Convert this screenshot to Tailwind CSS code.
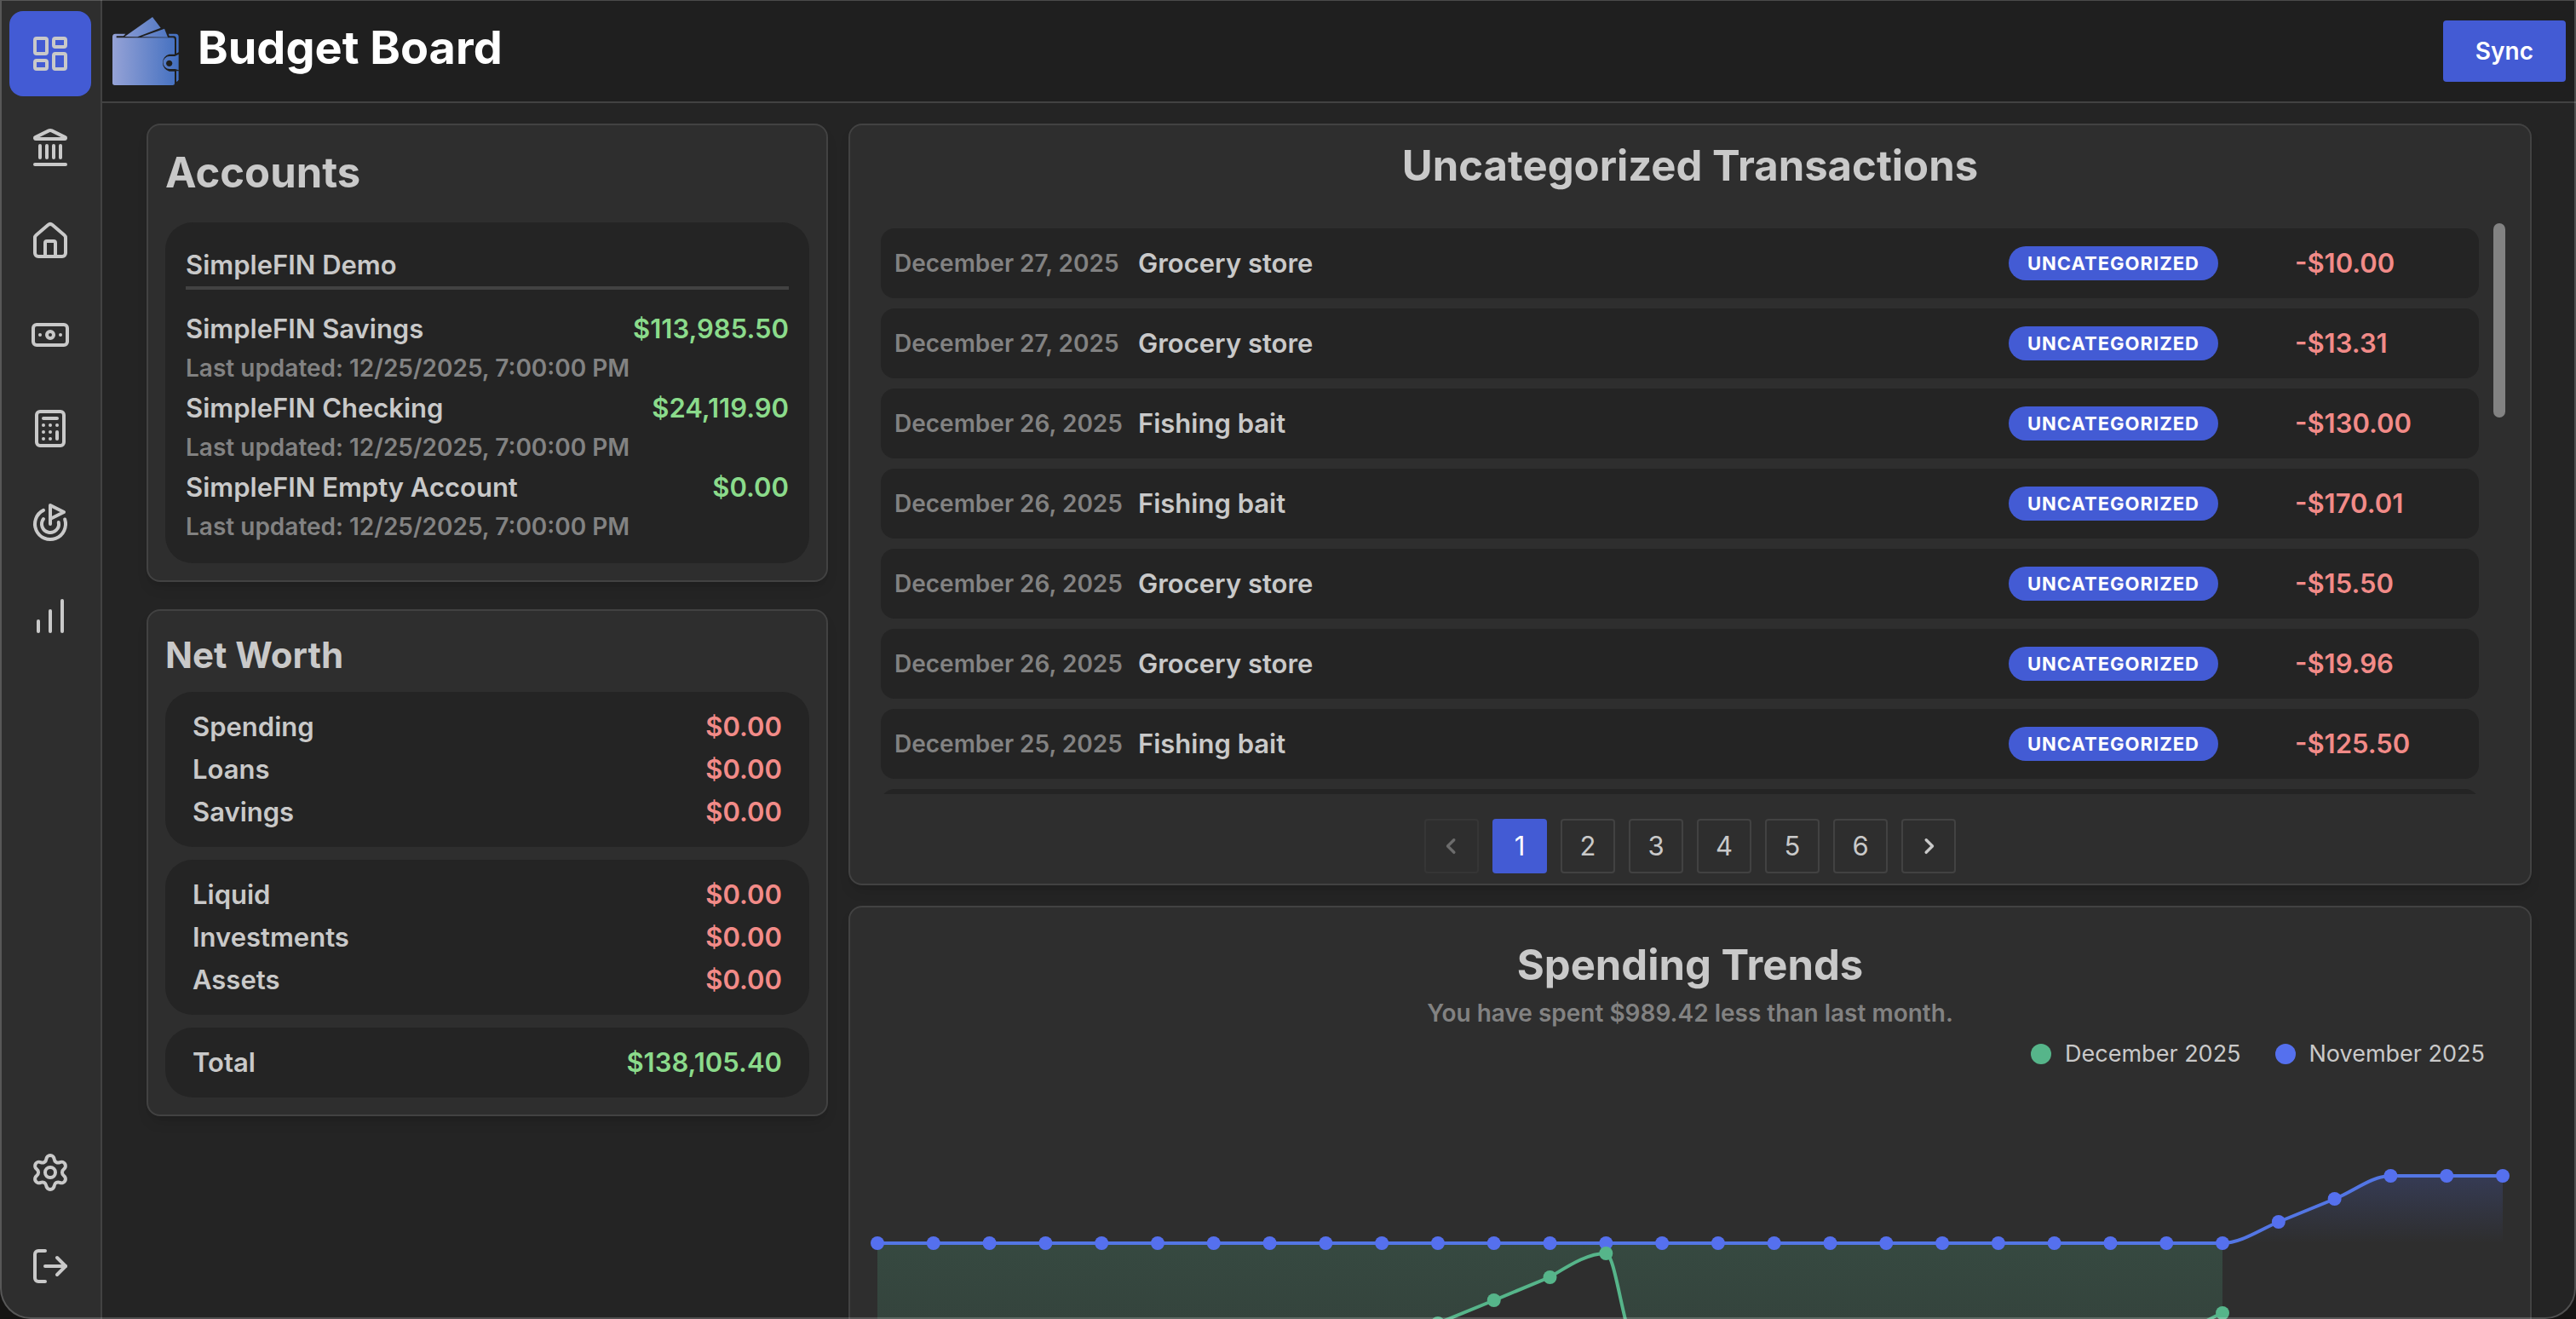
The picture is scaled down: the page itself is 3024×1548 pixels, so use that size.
<!DOCTYPE html>
<html lang="en" class="bg-[#242424]">
<head>
  <meta charset="utf-8">
  <title>Budget Board</title>
  <script src="https://cdn.jsdelivr.net/npm/@tailwindcss/browser@4"></script>
</head>
<body class="h-screen overflow-hidden bg-[#242424] text-[#c9c9c9] font-['Inter',sans-serif] font-semibold text-[31px] leading-[50px]">
  <div class="flex h-full">

    <!-- Sidebar -->
    <nav class="flex w-[120px] shrink-0 flex-col justify-between border-r-2 border-[#424242] bg-[#2e2e2e] pt-[13px] pr-[11px] pb-3 pl-[11px]">
      <div class="flex flex-col gap-[10px]">
        <button aria-label="Dashboard" class="flex h-[100px] items-center justify-center rounded-2xl bg-[#435bd4]">
          <svg class="size-12" viewBox="0 0 24 24" fill="none" stroke="currentColor" stroke-width="2" stroke-linecap="round" stroke-linejoin="round"><rect width="7" height="9" x="3" y="3" rx="1"/><rect width="7" height="5" x="14" y="3" rx="1"/><rect width="7" height="9" x="14" y="12" rx="1"/><rect width="7" height="5" x="3" y="16" rx="1"/></svg>
        </button>
        <button aria-label="Accounts" class="flex h-[100px] items-center justify-center rounded-2xl">
          <svg class="size-12" viewBox="0 0 24 24" fill="none" stroke="currentColor" stroke-width="2" stroke-linecap="round" stroke-linejoin="round"><path d="M10 18v-7"/><path d="M11.12 2.198a2 2 0 0 1 1.76.006l7.866 3.847c.476.233.31.949-.22.949H3.474c-.53 0-.695-.716-.22-.949z"/><path d="M14 18v-7"/><path d="M18 18v-7"/><path d="M3 22h18"/><path d="M6 18v-7"/></svg>
        </button>
        <button aria-label="Assets" class="flex h-[100px] items-center justify-center rounded-2xl">
          <svg class="size-12" viewBox="0 0 24 24" fill="none" stroke="currentColor" stroke-width="2" stroke-linecap="round" stroke-linejoin="round"><path d="M15 21v-8a1 1 0 0 0-1-1h-4a1 1 0 0 0-1 1v8"/><path d="M3 10a2 2 0 0 1 .709-1.528l7-6a2 2 0 0 1 2.582 0l7 6A2 2 0 0 1 21 10v9a2 2 0 0 1-2 2H5a2 2 0 0 1-2-2z"/></svg>
        </button>
        <button aria-label="Transactions" class="flex h-[100px] items-center justify-center rounded-2xl">
          <svg class="size-12" viewBox="0 0 24 24" fill="none" stroke="currentColor" stroke-width="2" stroke-linecap="round" stroke-linejoin="round"><rect width="20" height="12" x="2" y="6" rx="2"/><circle cx="12" cy="12" r="2"/><path d="M6 12h.01M18 12h.01"/></svg>
        </button>
        <button aria-label="Budgets" class="flex h-[100px] items-center justify-center rounded-2xl">
          <svg class="size-12" viewBox="0 0 24 24" fill="none" stroke="currentColor" stroke-width="2" stroke-linecap="round" stroke-linejoin="round"><rect width="16" height="20" x="4" y="2" rx="2"/><path d="M8 6h8"/><path d="M16 14v4"/><path d="M16 10h.01"/><path d="M12 10h.01"/><path d="M8 10h.01"/><path d="M12 14h.01"/><path d="M8 14h.01"/><path d="M12 18h.01"/><path d="M8 18h.01"/></svg>
        </button>
        <button aria-label="Goals" class="flex h-[100px] items-center justify-center rounded-2xl">
          <svg class="size-12" viewBox="0 0 24 24" fill="none" stroke="currentColor" stroke-width="2" stroke-linecap="round" stroke-linejoin="round"><path d="M12 13V2l8 4-8 4"/><path d="M20.561 10.222a9 9 0 1 1-12.55-5.29"/><path d="M8.002 9.997a5 5 0 1 0 8.9 2.02"/></svg>
        </button>
        <button aria-label="Trends" class="flex h-[100px] items-center justify-center rounded-2xl">
          <svg class="size-12" viewBox="0 0 24 24" fill="none" stroke="currentColor" stroke-width="2" stroke-linecap="round" stroke-linejoin="round"><path d="M5 21v-6"/><path d="M12 21V9"/><path d="M19 21V3"/></svg>
        </button>
      </div>
      <div class="flex flex-col gap-[10px]">
        <button aria-label="Settings" class="flex h-[100px] items-center justify-center rounded-2xl">
          <svg class="size-12" viewBox="0 0 24 24" fill="none" stroke="currentColor" stroke-width="2" stroke-linecap="round" stroke-linejoin="round"><path d="M9.671 4.136a2.34 2.34 0 0 1 4.659 0 2.34 2.34 0 0 0 3.319 1.915 2.34 2.34 0 0 1 2.33 4.033 2.34 2.34 0 0 0 0 3.831 2.34 2.34 0 0 1-2.33 4.033 2.34 2.34 0 0 0-3.319 1.915 2.34 2.34 0 0 1-4.659 0 2.34 2.34 0 0 0-3.32-1.915 2.34 2.34 0 0 1-2.33-4.033 2.34 2.34 0 0 0 0-3.831A2.34 2.34 0 0 1 6.35 6.051a2.34 2.34 0 0 0 3.319-1.915"/><circle cx="12" cy="12" r="3"/></svg>
        </button>
        <button aria-label="Log out" class="flex h-[100px] items-center justify-center rounded-2xl">
          <svg class="size-12" viewBox="0 0 24 24" fill="none" stroke="currentColor" stroke-width="2" stroke-linecap="round" stroke-linejoin="round"><path d="m16 17 5-5-5-5"/><path d="M21 12H9"/><path d="M9 21H5a2 2 0 0 1-2-2V5a2 2 0 0 1 2-2h4"/></svg>
        </button>
      </div>
    </nav>

    <div class="flex min-w-0 flex-1 flex-col">
      <!-- Header -->
      <header class="flex h-[121px] shrink-0 items-center justify-between border-b-2 border-[#424242] bg-[#1f1f1f] px-3">
        <div class="flex items-center gap-[22px]">
          <svg class="h-[84px] w-[78px]" viewBox="24 18 234 252">
            <defs>
              <linearGradient id="wallet" gradientUnits="userSpaceOnUse" x1="24" y1="0" x2="258" y2="0">
                <stop offset="0" stop-color="#95a2d6"/>
                <stop offset="1" stop-color="#426fc0"/>
              </linearGradient>
            </defs>
            <g fill="url(#wallet)">
              <path d="M67 93 165 24 194 62 112 94z"/>
              <path d="M126 94 207 65 219 95z"/>
              <path d="M34 83H70L63 91H38V97H237Q243 97 243 104V155H224A31 31 0 0 0 224 215H243V258Q243 264 236 264H32Q24 264 24 256V94Q24 83 34 83z"/>
              <path d="M222 83H247Q257 83 257 94V148L249 152V101Q249 92 240 91H224z"/>
              <path fill-rule="evenodd" d="M225 162H244L257 155V211L245 207H225A22 22 0 0 1 225 162zM224 176a11 11 0 1 0 .1 0z"/>
              <path d="M249 214H257V244Q256 250 249 252z"/>
            </g>
          </svg>
          <h1 class="pb-2 text-[54px] leading-[64px] font-bold text-white">Budget Board</h1>
        </div>
        <button class="h-[72px] rounded-[4px] bg-[#435bd4] px-[38px] text-[28px] text-white">Sync</button>
      </header>

      <!-- Dashboard -->
      <main class="mx-auto flex w-full max-w-[2800px] min-h-0 flex-1 items-start gap-6 pt-6">
        <div class="flex w-[800px] shrink-0 flex-col gap-8">
          <section class="rounded-2xl border-2 border-[#424242] bg-[#2e2e2e] px-5 pt-[18px] pb-5 shadow-lg">
            <h2 class="mb-5 text-[49px] leading-[76px] font-bold">Accounts</h2>
            <div class="rounded-[32px] bg-[#242424] px-6 pt-[25px] pb-[21px]">
              <div class="mb-[21px] border-b-4 border-[#424242]">SimpleFIN Demo</div>
              <div class="flex justify-between"><span>SimpleFIN Savings</span><span class="text-[#8bdb8b]">$113,985.50</span></div>
              <div class="text-[28px] leading-[43px] text-[#828282]">Last updated: 12/25/2025, 7:00:00 PM</div>
              <div class="flex justify-between"><span>SimpleFIN Checking</span><span class="text-[#8bdb8b]">$24,119.90</span></div>
              <div class="text-[28px] leading-[43px] text-[#828282]">Last updated: 12/25/2025, 7:00:00 PM</div>
              <div class="flex justify-between"><span>SimpleFIN Empty Account</span><span class="text-[#8bdb8b]">$0.00</span></div>
              <div class="text-[28px] leading-[43px] text-[#828282]">Last updated: 12/25/2025, 7:00:00 PM</div>
            </div>
          </section>

          <section class="flex flex-col gap-[15px] rounded-2xl border-2 border-[#424242] bg-[#2e2e2e] px-5 pt-6 pb-5 shadow-lg">
            <h3 class="text-[42px] leading-[56px] font-bold">Net Worth</h3>
            <div class="rounded-[32px] bg-[#242424] px-8 py-4">
              <div class="flex justify-between"><span>Spending</span><span class="text-[#f28b88]">$0.00</span></div>
              <div class="flex justify-between"><span>Loans</span><span class="text-[#f28b88]">$0.00</span></div>
              <div class="flex justify-between"><span>Savings</span><span class="text-[#f28b88]">$0.00</span></div>
            </div>
            <div class="rounded-[32px] bg-[#242424] px-8 py-4">
              <div class="flex justify-between"><span>Liquid</span><span class="text-[#f28b88]">$0.00</span></div>
              <div class="flex justify-between"><span>Investments</span><span class="text-[#f28b88]">$0.00</span></div>
              <div class="flex justify-between"><span>Assets</span><span class="text-[#f28b88]">$0.00</span></div>
            </div>
            <div class="rounded-[32px] bg-[#242424] px-8 py-4">
              <div class="flex justify-between"><span>Total</span><span class="text-[#8bdb8b]">$138,105.40</span></div>
            </div>
          </section>
        </div>

        <div class="flex min-w-0 flex-1 flex-col gap-6">
          <section class="rounded-2xl border-2 border-[#424242] bg-[#2e2e2e] pt-[10px] pb-3 shadow-lg">
            <h2 class="text-center text-[49px] leading-[76px] font-bold">Uncategorized Transactions</h2>
            <div class="mt-[29px] flex h-[670px] items-start gap-[17px] overflow-hidden pr-[29px] pl-9">
              <ul id="transactions" class="flex flex-1 flex-col gap-3 pt-[6px]"></ul>
              <div class="h-[228px] w-[14px] rounded-full bg-[#828282]"></div>
            </div>
            <div class="mt-[29px] flex justify-center gap-4 font-normal">
              <button disabled aria-label="Previous page" class="flex size-16 items-center justify-center rounded-[4px] border-2 border-[#424242] opacity-40">
                <svg class="size-9" viewBox="0 0 16 16" fill="currentColor"><path d="M9.781 4.219c.292.293.292.768 0 1.061L7.06 8l2.72 2.72a.75.75 0 1 1-1.06 1.06L5.47 8.53a.75.75 0 0 1 0-1.06l3.25-3.25a.75.75 0 0 1 1.061 0z"/></svg>
              </button>
              <button class="size-16 rounded-[4px] bg-[#435bd4] text-white">1</button>
              <button class="size-16 rounded-[4px] border-2 border-[#424242]">2</button>
              <button class="size-16 rounded-[4px] border-2 border-[#424242]">3</button>
              <button class="size-16 rounded-[4px] border-2 border-[#424242]">4</button>
              <button class="size-16 rounded-[4px] border-2 border-[#424242]">5</button>
              <button class="size-16 rounded-[4px] border-2 border-[#424242]">6</button>
              <button aria-label="Next page" class="flex size-16 items-center justify-center rounded-[4px] border-2 border-[#424242]">
                <svg class="size-9" viewBox="0 0 16 16" fill="currentColor"><path d="M6.219 4.219a.75.75 0 0 1 1.061 0l3.25 3.25a.75.75 0 0 1 0 1.061l-3.25 3.25a.75.75 0 1 1-1.06-1.06L8.94 8 6.22 5.28a.75.75 0 0 1 0-1.061z"/></svg>
              </button>
            </div>
          </section>

          <section class="rounded-2xl border-2 border-[#424242] bg-[#2e2e2e] pt-[30px] shadow-lg">
            <h2 class="text-center text-[49px] leading-[76px] font-bold">Spending Trends</h2>
            <p class="text-center text-[28px] leading-[36px] text-[#828282]">You have spent $989.42 less than last month.</p>
            <div class="mt-3 flex justify-end gap-10 pr-[53px] text-[27px] leading-[36px] font-normal">
              <div class="flex items-center gap-4"><span class="size-6 rounded-full bg-[#56b58a]"></span>December 2025</div>
              <div class="flex items-center gap-4"><span class="size-6 rounded-full bg-[#5570ee]"></span>November 2025</div>
            </div>
            <svg id="trend" class="mt-[45px] w-full" viewBox="0 0 1972 400">
              <defs>
                <linearGradient id="above" gradientUnits="userSpaceOnUse" x1="0" y1="80" x2="0" y2="159">
                  <stop offset="0" stop-color="#5570ee" stop-opacity="0.2"/>
                  <stop offset="1" stop-color="#5570ee" stop-opacity="0"/>
                </linearGradient>
                <linearGradient id="below" gradientUnits="userSpaceOnUse" x1="0" y1="159" x2="0" y2="400">
                  <stop offset="0" stop-color="#56b58a" stop-opacity="0.2"/>
                  <stop offset="1" stop-color="#56b58a" stop-opacity="0.1"/>
                </linearGradient>
              </defs>
              <path fill="url(#below)" d="M32 159H1611V241C1560 262 1540 300 1480 340H960C912 340 903 171 887 171C865 171 843 186 821 199L756 226L690 253L624 280L500 340H32z"/>
              <path fill="url(#above)" d="M1611 159C1633 159 1655 143 1677 134L1743 107C1765 98 1787 80 1808 80H1940V159z"/>
              <path fill="none" stroke="#5376e4" stroke-width="4" d="M32 159H1611C1633 159 1655 143 1677 134L1743 107C1765 98 1787 80 1808 80H1940"/>
              <path fill="none" stroke="#56b58a" stroke-width="4" d="M1480 340C1540 300 1560 262 1611 241M500 340L624 280L690 253L756 226L821 199C843 186 865 171 887 171C903 171 912 340 960 340"/>
              <g id="dots"></g>
            </svg>
          </section>
        </div>
      </main>
    </div>
  </div>

  <!-- Window frame -->
  <div class="pointer-events-none fixed inset-0 overflow-hidden">
    <div class="h-full rounded-b-[36px] border-2 border-t border-white/20 shadow-[0_0_0_40px_#151413]"></div>
  </div>

  <script>
    const transactions = [
      ['December 27, 2025', 'Grocery store', '-$10.00'],
      ['December 27, 2025', 'Grocery store', '-$13.31'],
      ['December 26, 2025', 'Fishing bait', '-$130.00'],
      ['December 26, 2025', 'Fishing bait', '-$170.01'],
      ['December 26, 2025', 'Grocery store', '-$15.50'],
      ['December 26, 2025', 'Grocery store', '-$19.96'],
      ['December 25, 2025', 'Fishing bait', '-$125.50'],
      ['December 25, 2025', 'Grocery store', '-$12.25'],
    ];
    document.getElementById('transactions').innerHTML = transactions.map(([date, name, amount]) => `
      <li class="flex items-center rounded-2xl bg-[#242424] p-4">
        <span class="w-[286px] text-[28px] text-[#828282]">${date}</span>
        <span class="flex-1">${name}</span>
        <span class="mr-[90px] flex h-10 w-[246px] items-center justify-center rounded-full bg-[#435bd4] text-[22px] font-bold tracking-[1px] text-white uppercase">Uncategorized</span>
        <span class="w-[200px] text-[#f28b88]">${amount}</span>
      </li>`).join('');

    // one dot per day, 30 days across the chart
    const x = day => 32 + day * 1908 / 29;
    const november = [...Array(25).fill(159), 134, 107, 80, 80, 80];
    const december = { 10: 253, 11: 226, 12: 199, 13: 171, 24: 241 };
    document.getElementById('dots').innerHTML =
      november.map((y, day) => `<circle cx="${x(day)}" cy="${y}" r="8" fill="#5570ee"/>`).join('') +
      Object.entries(december).map(([day, y]) => `<circle cx="${x(day)}" cy="${y}" r="8" fill="#56b58a"/>`).join('');
  </script>
</body>
</html>
